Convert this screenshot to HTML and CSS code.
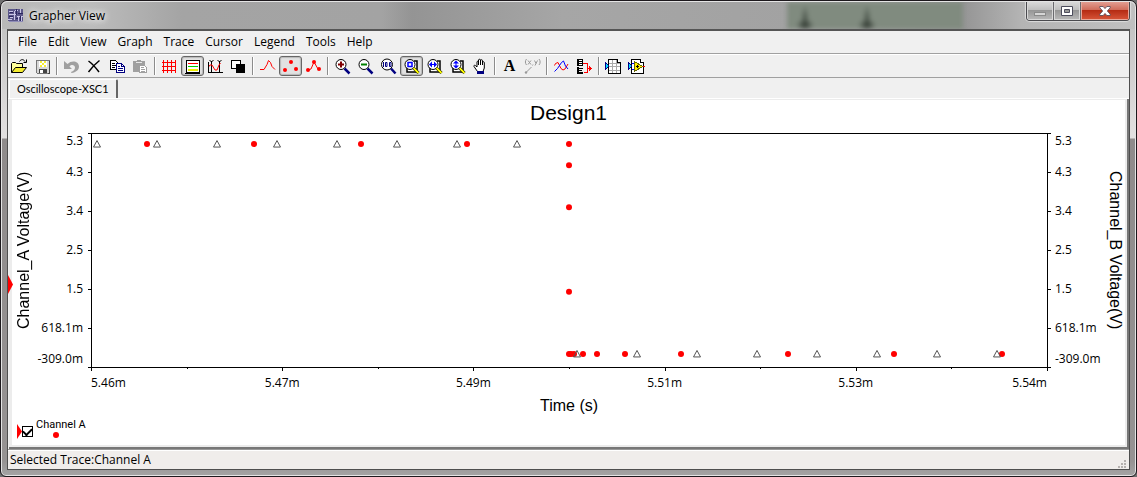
FILE: index.html
```html
<!DOCTYPE html>
<html lang="en">
<head>
<meta charset="utf-8">
<title>Grapher View</title>
<link rel="stylesheet" href="styles.css">
</head>
<body>
<div class="window">
  <header class="titlebar">
    <span class="glass" aria-hidden="true"></span>
    <svg class="app-icon" viewBox="0 0 16 16" aria-hidden="true" shape-rendering="crispEdges">
      <path fill="#5a5688" d="M0 1h15v12H0z"/>
      <path stroke="#c9c6e6" fill="none" d="M1 3.5h4M7 2.5h3M12 1v5M1 6.5h7M6.500 3v9M9 8.500h6M2 9.500h3M10.500 9v4M13.500 9v4M0 11.500h4"/>
      <path stroke="#2b2760" fill="none" d="M2 4.500h3M8.500 1v6M10 5.500h5M1 8.500h4M12.500 8v5M8 10.500h2"/>
      <path fill="#8f8db8" d="M1 13h14v1H1z"/>
    </svg>
    <h1 class="title">Grapher View</h1>
    <div class="win-buttons">
      <button class="win-btn min" aria-label="Minimize"><svg viewBox="0 0 12 10"><rect x=".5" y="6.500" width="11" height="3" fill="#d6d6d6" stroke="#8a8a8a"/></svg></button>
      <button class="win-btn max" aria-label="Maximize"><svg viewBox="0 0 12 10"><path fill="#fff" fill-rule="evenodd" stroke="#4c4c5c" d="M.5.5h11v9H.5zM3.500 3.500v3h5v-3z"/></svg></button>
      <button class="win-btn close" aria-label="Close"><svg viewBox="0 0 12 10"><path fill="#fff" stroke="#4c4452" stroke-width=".8" d="M.8.5h3.400L6 2.600 7.800.5h3.400v1.300L8.300 5l2.900 3.200v1.300H7.800L6 7.400 4.200 9.500H.8V8.200L3.700 5 .8 1.800z"/></svg></button>
    </div>
  </header>

  <div class="client">
    <nav class="menu">
      <button>File</button><button>Edit</button><button>View</button><button>Graph</button><button>Trace</button><button>Cursor</button><button>Legend</button><button>Tools</button><button>Help</button>
    </nav>

    <div class="toolbar" role="toolbar">
      <button aria-label="Open"><svg viewBox="0 0 17 17"><path fill="#ffff9a" stroke="#000" d="M.5 14.500v-9l1-1h3l1 1h6v4"/><path fill="#f4ec30" stroke="#000" d="M.5 14.500l4-5h11l-4 5z"/><path fill="none" stroke="#000" d="M8.500 3.500c1.500-2.500 4-2.500 5.500 0M15.500 1.500v3h-3"/></svg></button>
      <button aria-label="Save"><svg viewBox="0 0 17 17" shape-rendering="crispEdges"><path fill="#d8d8d8" stroke="#777" d="M2.500 2.500h13v13h-12l-1-1z"/><path fill="#fff" d="M5 3h8v6H5z"/><path fill="#f7ee35" d="M6 3h2v2h2v2h2v2h-2V7H8V5H6zM10 3h2v2h-2zM6 7h2v2H6z"/><path fill="#444" d="M5 11h8v4H5zM14 15h2v1h-2zM15 3h1v13h-1z"/><path fill="#fff" d="M6 12h3v3H6z"/></svg></button>
      <span class="sep"></span>
      <button aria-label="Undo" class="off"><svg viewBox="0 0 17 17"><path fill="#a0a0a0" d="M1 3v8h8L6.500 8.500c2-2.500 5.500-1.500 5.500 1 0 2-1.500 3.500-4 4.500l.5 1c4.500-.7 7.500-3 7.500-6.500 0-5-7-7-11.500-2.500z"/></svg></button>
      <button aria-label="Delete"><svg viewBox="0 0 17 17"><path fill="none" stroke="#000" stroke-width="1.500" d="M2.500 3c3.500 2.500 7.500 7 10.500 11M13.500 2.500C9.500 5.500 5.500 10 2.500 14"/></svg></button>
      <button aria-label="Copy"><svg viewBox="0 0 17 17" shape-rendering="crispEdges"><path fill="#fff" stroke="#000" d="M1.500 2.500h5l3 3v6h-8z"/><path stroke="#000" d="M3 5.500h3M3 7.500h4M3 9.500h3"/><path fill="#fff" stroke="#000080" d="M7.500 5.500h5l3 3v6h-8z"/><path fill="none" stroke="#000080" d="M12.500 5v3.500h3M9 8.500h2M9 10.500h5M9 12.500h5"/></svg></button>
      <button aria-label="Paste" class="off"><svg viewBox="0 0 17 17" shape-rendering="crispEdges"><path fill="#a0a0a0" d="M1 3h4V2h4v1h4v4H7v7H1z"/><path fill="#e8e8e8" d="M4 4h6v1H4z"/><path fill="#fff" stroke="#a0a0a0" d="M7.500 7.500h5l2 2v5h-7z"/><path stroke="#a0a0a0" d="M9 9.500h3M9 11.500h4M9 13.500h4"/></svg></button>
      <span class="sep"></span>
      <button aria-label="Toggle grid"><svg viewBox="0 0 17 17" shape-rendering="crispEdges"><path stroke="#f00" d="M2.500 2v13M6.500 2v13M10.500 2v13M14.500 2v13M1 4.500h14M1 8.500h14M1 12.500h14"/></svg></button>
      <button aria-label="Toggle legend" class="on" aria-pressed="true"><svg viewBox="0 0 17 17" shape-rendering="crispEdges"><path fill="#fff" stroke="#000" d="M2.500 2.500h13v12h-13z"/><path fill="none" stroke="#000" d="M1.500 14.500v1h14"/><path stroke="#f00" d="M4 5.500h10"/><path stroke="#0c0" d="M4 8.500h10"/><path stroke="#ee0" stroke-width="2" d="M4 12h10"/></svg></button>
      <button aria-label="Toggle cursors"><svg viewBox="0 0 17 17"><path shape-rendering="crispEdges" stroke="#000" d="M4.500 3v12M12.500 3v12"/><path fill="none" stroke="#000" d="M2.500 2l2 2 2-2M10.500 2l2 2 2-2"/><path fill="none" stroke="#f00" d="M1.500 12v-3l1.500-2h2l3 5h2l2-5 1.500-2"/><path shape-rendering="crispEdges" fill="none" stroke="#000" d="M1.500 4v10.500h14"/></svg></button>
      <button aria-label="Invert colors"><svg viewBox="0 0 17 17" shape-rendering="crispEdges"><path fill="#000" d="M6 6h9v9H6z"/><path fill="#fff" stroke="#000" d="M1.500 2.500h9v8h-9z"/><path fill="#000" d="M6 6h4v4H6z"/><path fill="none" stroke="#fff" d="M5.500 10V5.500H10"/></svg></button>
      <span class="sep"></span>
      <button aria-label="Show lines"><svg viewBox="0 0 17 17"><path fill="none" stroke="#f00" d="M1 11.500h4l3-5 1.500-4 2 2 1.500 4 3 3"/></svg></button>
      <button aria-label="Show points" class="on" aria-pressed="true"><svg viewBox="0 0 17 17"><g fill="#f00"><circle cx="3" cy="12" r="2"/><circle cx="9" cy="4" r="2"/><circle cx="14" cy="11" r="2"/></g></svg></button>
      <button aria-label="Show lines and points"><svg viewBox="0 0 17 17"><path fill="none" stroke="#f00" d="M3 12l3-1 3-7 4 7"/><g fill="#f00"><circle cx="3" cy="12" r="2"/><circle cx="9" cy="4" r="2"/><circle cx="14" cy="11" r="2"/></g></svg></button>
      <span class="sep"></span>
      <button aria-label="Zoom in"><svg viewBox="0 0 17 17"><circle cx="7" cy="6.500" r="5" fill="#fff" stroke="#000"/><path stroke="#800000" stroke-width="2" d="M4 6.500h6M7 3.500v6"/><path stroke="#000080" stroke-width="2.500" d="M10.500 10.500l5 5"/></svg></button>
      <button aria-label="Zoom out"><svg viewBox="0 0 17 17"><circle cx="7" cy="6.500" r="5" fill="#fff" stroke="#000"/><path stroke="#008000" stroke-width="2" d="M4 6.500h6"/><path stroke="#000080" stroke-width="2.500" d="M10.500 10.500l5 5"/></svg></button>
      <button aria-label="Restore zoom"><svg viewBox="0 0 17 17"><circle cx="7" cy="6.500" r="5.500" fill="#fff" stroke="#000"/><path fill="none" stroke="#000080" d="M3.500 4v5M5.500 4.500h1.500v4h-1.500zM9.500 4.500H11v4H9.500z"/><path stroke="#000080" stroke-width="2.500" d="M11 10.500l4.500 5"/></svg></button>
      <button aria-label="Zoom area" class="on" aria-pressed="true"><svg viewBox="0 0 17 17"><path fill="#fff" stroke="#000" stroke-width="1.500" d="M4 9v5h10V3h-3"/><circle cx="7" cy="6.500" r="5" fill="#fff" stroke="#000"/><path fill="none" stroke="#00f" stroke-width="1.500" d="M5 4.500h4v4H5z"/><path stroke="#000" stroke-width="3" d="M10.500 10l5 5"/><path stroke="#ff0" stroke-width="1.800" d="M10.500 10l5 5"/></svg></button>
      <button aria-label="Zoom horizontal"><svg viewBox="0 0 17 17"><path fill="#fff" stroke="#000" stroke-width="1.500" d="M4 9v5h10V3h-3"/><circle cx="7" cy="6.500" r="5" fill="#fff" stroke="#000"/><path fill="#00f" d="M3 6.500l3-3V6h2V3.500l3 3-3 3V7H6v2.500z"/><path stroke="#000" stroke-width="3" d="M10.500 10l5 5"/><path stroke="#ff0" stroke-width="1.800" d="M10.500 10l5 5"/></svg></button>
      <button aria-label="Zoom vertical"><svg viewBox="0 0 17 17"><path fill="#fff" stroke="#000" stroke-width="1.500" d="M4 9v5h10V3h-3"/><circle cx="7" cy="6.500" r="5" fill="#fff" stroke="#000"/><path fill="#00f" d="M7 2.500l3 3H7.500v2H10l-3 3-3-3h2.500v-2H4z"/><path stroke="#000" stroke-width="3" d="M10.500 10l5 5"/><path stroke="#ff0" stroke-width="1.800" d="M10.500 10l5 5"/></svg></button>
      <button aria-label="Pan"><svg viewBox="0 0 17 17"><path fill="#fff" stroke="#000" d="M5.500 13.500l-3.500-5c-.5-1.500 1-1.500 2-.5l1 1V4c0-1 1.500-1 1.500 0v3-5c0-1 2-1 2 0v5-4.500c0-1 2-1 2 0V7 4.500c0-1 1.800-1 1.800 0V10l-1.300 3.500z"/><path fill="#000080" d="M5 13h7v3H5z"/></svg></button>
      <span class="sep"></span>
      <button aria-label="Add text" class="letter">A</button>
      <button aria-label="Add data label" class="off"><svg viewBox="0 0 17 17"><path fill="none" stroke="#999" d="M2.500 1c-1.500 2-1.500 4 0 6M4 2.500l3 4M7 2.500l-3 4M9 6.500l-.5 1M10.500 2.500l1.500 3M13.500 2.500l-2.500 5M15 1c1.500 2 1.500 4 0 6M2.500 14l5-5"/><circle cx="2" cy="14.500" r="1.200" fill="#999"/></svg></button>
      <span class="sep"></span>
      <button aria-label="Overlay traces"><svg viewBox="0 0 17 17"><path fill="none" stroke="#f00" d="M1.500 7.500l1-2 2.500-1 3 6 2 1.500 2-1 3-5"/><path fill="none" stroke="#00f" d="M1.500 13.500l3-3 4-6 2-1.500 2 5 2.500 3"/></svg></button>
      <button aria-label="Digital traces"><svg viewBox="0 0 17 17" shape-rendering="crispEdges"><path fill="#000" d="M1 1h6v7H1zM1 9h2v7H1zM3 10h4v1H3zM3 12h3v1H3zM3 14h4v2H3z"/><path stroke="#fff" d="M3 2.500h3M3 4.500h3M3 6.500h3"/><path fill="none" stroke="#f00" d="M7 5.500h4.500v9H8M11 10.500h4"/><path fill="#f00" d="M13 8l3 2.500-3 2.500z"/></svg></button>
      <span class="sep"></span>
      <button aria-label="Export to spreadsheet"><svg viewBox="0 0 17 17" shape-rendering="crispEdges"><path fill="#fff" stroke="#000" d="M3.500 1.500h9l3 3v11h-12z"/><path stroke="#aaa" d="M7.500 2v13M11.500 2v13M4 5.500h11M4 8.500h11M4 12.500h11"/><path fill="#fff" stroke="#000" d="M12.500 1.500v3h3"/><path fill="#0df" stroke="#008" d="M.5 4.500v7l3.500-3.500z"/></svg></button>
      <button aria-label="Export to instrument"><svg viewBox="0 0 17 17" shape-rendering="crispEdges"><path fill="#fff" stroke="#000" d="M3.500 1.500h9l3 3v11h-12z"/><path fill="#fff" stroke="#000" d="M12.500 1.500v3h3"/><path fill="#0df" stroke="#008" d="M.5 4.500v7l3.500-3.500z"/><path stroke="#00f" d="M4 5.500h3M4 11.500h3"/><path stroke="#f00" d="M14 8.500h3"/><path fill="#fe0" stroke="#660" d="M6.500 3.500v10l8-5z"/><path stroke="#000" d="M8 8.500h3M9.500 7v3"/></svg></button>
    </div>

    <div class="tabs" role="tablist"><button class="tab" role="tab" aria-selected="true">Oscilloscope-XSC1</button></div>

    <main class="page">
      <span class="page-marker" aria-hidden="true"></span>
      <h2 class="chart-title">Design1</h2>
      <div class="chart">
        <div class="axis-title left">Channel_A Voltage(V)</div>
        <div class="y-labels left"><span>5.3</span><span>4.3</span><span>3.4</span><span>2.5</span><span>1.5</span><span>618.1m</span><span>-309.0m</span></div>
        <svg class="plot" id="plot" role="img" aria-label="Channel A and Channel B voltage over time">
          <defs><path id="tri" d="M0 -3.500L3.500 3H-3.500Z" fill="none" stroke="#555"/></defs>
        </svg>
        <div class="y-labels right"><span>5.3</span><span>4.3</span><span>3.4</span><span>2.5</span><span>1.5</span><span>618.1m</span><span>-309.0m</span></div>
        <div class="axis-title right">Channel_B Voltage(V)</div>
        <div class="x-labels"><span>5.46m</span><span>5.47m</span><span>5.49m</span><span>5.51m</span><span>5.53m</span><span>5.54m</span></div>
        <div class="x-title">Time (s)</div>
      </div>
      <div class="legend">
        <span class="trace-marker" aria-hidden="true"></span>
        <input type="checkbox" id="chA" checked>
        <label for="chA">Channel A<span class="dot"></span></label>
      </div>
    </main>

    <footer class="status"><span>Selected Trace:Channel A</span>
      <svg class="grip" viewBox="0 0 9 9" aria-hidden="true" shape-rendering="crispEdges"><path fill="#b5b1af" d="M6 0h2v2H6zM3 3h2v2H3zM6 3h2v2H6zM0 6h2v2H0zM3 6h2v2H3zM6 6h2v2H6z"/></svg>
    </footer>
  </div>
</div>
<script src="plot.js"></script>
</body>
</html>
```
FILE: plot.js
```js
// Coordinates are on a 956 x 233 grid and drawn as percentages of the plot area.
const W = 956, H = 233;
const NS = "http://www.w3.org/2000/svg";
const plot = document.getElementById("plot");
const px = x => (x / W * 100) + "%";
const py = y => (y / H * 100) + "%";

function add(name, attrs) {
  const el = document.createElementNS(NS, name);
  for (const key in attrs) el.setAttribute(key, attrs[key]);
  plot.appendChild(el);
}

function tick(x, y, dx, dy) {
  add("rect", { class: "tick", x: px(x), y: py(y), width: Math.abs(dx) || 1, height: Math.abs(dy) || 1,
    transform: `translate(${Math.min(dx, 0)} ${Math.min(dy, 0)})` });
}

// Frame
add("rect", { class: "tick", x: 0, y: 0, width: "100%", height: 1 });
add("rect", { class: "tick", x: 0, y: "100%", width: "100%", height: 1 });
add("rect", { class: "tick", x: 0, y: 0, width: 1, height: "100%" });
add("rect", { class: "tick", x: "100%", y: 0, width: 1, height: "100%" });

// Ticks
for (const i of [0, 2, 4, 6, 8, 10, 12]) {
  tick(0, i * H / 12, -3, 0);
  tick(W, i * H / 12, 4, 0);
}
for (let i = 0; i <= 10; i++) tick(i * W / 10, H, 0, i % 2 ? 2 : 4);

// Samples
const dots = [[56, 11], [163, 11], [270, 11], [376, 11], [478, 11], [478, 32], [478, 74], [478, 158],
  [478, 220], [480, 220], [483, 220], [492, 220], [506, 220], [534, 220], [590, 220], [697, 220], [803, 220], [911, 220]];
for (const [x, y] of dots) add("circle", { class: "sample", cx: px(x), cy: py(y), r: 3 });
for (let i = 0; i < 16; i++) add("use", { href: "#tri", x: px(6 + 60 * i), y: py(i < 8 ? 11 : 220) });
```
FILE: styles.css
```css
* { box-sizing: border-box; }
body { margin: 0; background: #6f6f6f; font: 12px/16px "Open Sans", "Noto Sans", sans-serif; color: #000; }
button { font: inherit; color: inherit; border: 0; background: none; padding: 0; margin: 0; }
h1, h2 { margin: 0; font-weight: normal; }

.window {
  display: flex; flex-direction: column; height: 100vh; padding: 0 6px 6px;
  border: 1px solid #1c181c; border-radius: 7px 7px 6px 6px;
  box-shadow: inset 0 0 0 1px #e4e4e4;
  background: linear-gradient(#c4c4c4 0 28px, #dcdada 110px, #e2e0e0 137px, #8f8b8b 138px, #969393 460px, #a4a4a4);
}
.titlebar {
  position: relative; display: flex; align-items: center; height: 28px; margin: 0 -5px; padding-left: 6px;
  border-top: 1px solid #e4e4e4; border-radius: 6px 6px 0 0; overflow: hidden;
  background: linear-gradient(90deg, #b8b8b8, #bcbcbc 90px, #a4a4a4 180px, #a3a3a3 380px, #949494 410px, #a6a6a6 560px, #a2a2a2 70%, #969696 85%, #b4b4b4 90%, #c0c0c0);
}
.glass {
  position: absolute; top: 0; bottom: 0; left: 69.300%; width: 15.500%; filter: blur(2px);
  background:
    radial-gradient(ellipse 9px 6px at 18px 23px, #303830, transparent),
    radial-gradient(ellipse 4px 14px at 18px 17px, #465046, transparent),
    radial-gradient(ellipse 9px 6px at 80px 23px, #303830, transparent),
    radial-gradient(ellipse 4px 14px at 80px 17px, #465046, transparent),
    #808b7f;
}
.app-icon { width: 16px; height: 16px; }
.title { margin-left: 5px; font-size: 12px; text-shadow: 0 0 6px #fff, 0 0 8px #fff; }
.win-buttons {
  position: relative; display: flex; align-self: flex-start; margin: -1px 5px 0 auto; height: 20px;
  border: 1px solid #4a4a4e; border-top: 0; border-radius: 0 0 4px 4px; overflow: hidden; box-shadow: 0 0 1px 1px #ddd;
}
.win-btn {
  display: grid; place-items: center; width: 27px; border-right: 1px solid #6a6a6e;
  background: linear-gradient(#dcdcdc, #bdbdbd 48%, #969696 50%, #b9b9b9); box-shadow: inset 0 0 0 1px #d8d8d8;
}
.win-btn svg { width: 12px; height: 10px; }
.win-btn.close { width: 48px; border: 0; background: linear-gradient(#e4a498, #cf6a58 48%, #b52c14 50%, #d8563a); box-shadow: inset 0 0 0 1px #e8a89a; }

.client { flex: 1; display: flex; flex-direction: column; min-height: 0; border: 1px solid #4e4e4e; border-top: 2px solid #555; background: #f0f0f0; }
.menu { display: flex; gap: 11px; height: 23px; padding: 2px 10px; border-bottom: 1px solid #a0a0a0; }
.toolbar { display: flex; align-items: center; height: 24px; border-top: 1px solid #fff; border-bottom: 1px solid #a0a0a0; }
.toolbar button { flex: none; display: grid; place-items: center; width: 23px; height: 20px; }
.toolbar svg { width: 17px; height: 17px; }
.toolbar .on { border: 1px solid #666; border-radius: 3px; background: #e2e2e2; box-shadow: inset 0 0 1px 1px #b8b8b8; }
.toolbar .letter { font: bold 16px/20px "Liberation Serif", serif; }
.sep { flex: none; width: 6px; height: 18px; background: linear-gradient(90deg, transparent 2px, #8c8c8c 2px 3px, #fff 3px 4px, transparent 4px); }

.tabs { display: flex; height: 21px; padding: 1px 1px 0; border-bottom: 1px solid #fff; }
.tab { padding: 0 7px; border: 1px solid #fff; border-right: 2px solid #666; border-bottom: 0; border-radius: 2px 2px 0 0; font: 11px/18px Lato, sans-serif; }

.page {
  position: relative; flex: 1; display: flex; flex-direction: column; min-height: 0; margin: 0 2px 1px 1px;
  border: solid #ececec; border-width: 1px 2px 2px 3px; background: #fff; box-shadow: 1px 1px 0 1px #777;
}
.page-marker { position: absolute; left: -4px; top: 175px; width: 5px; height: 19px; background: #f00; clip-path: polygon(0 0, 100% 50%, 0 100%); }
.chart-title { font: 21px/26px "Liberation Sans", Arial, sans-serif; text-align: center; margin-bottom: 7px; }
.chart {
  flex: 1; min-height: 0; display: grid; font: 12px/16px "Open Sans", sans-serif;
  grid-template: 1fr 31px 16px / 24px 47px 8px 1fr 8px 49px 21px;
}
.axis-title { display: grid; place-items: center; font: 16px/20px "Liberation Sans", Arial, sans-serif; writing-mode: vertical-rl; white-space: nowrap; }
.axis-title.left { transform: rotate(180deg); }
.axis-title.right { grid-column: 7; grid-row: 1; }
.y-labels { display: grid; grid-template-rows: 1fr 2fr 2fr 2fr 2fr 2fr 1fr; min-height: 0; align-items: center; }
.y-labels.left { text-align: right; }
.y-labels.right { grid-column: 6; grid-row: 1; }
.y-labels span { min-height: 0; }
.y-labels span:first-child { align-self: start; }
.y-labels span:last-child { align-self: end; }
.plot { grid-column: 4; grid-row: 1; width: 100%; height: 100%; min-height: 0; overflow: visible; display: block; }
.tick { fill: #000; shape-rendering: crispEdges; }
.sample { fill: #f00; }
.x-labels { grid-column: 4; grid-row: 2; display: grid; grid-template-columns: 1fr 2fr 2fr 2fr 2fr 1fr; padding-top: 8px; text-align: center; }
.x-labels span:first-child { text-align: left; }
.x-labels span:last-child { text-align: right; }
.x-title { grid-column: 4; grid-row: 3; text-align: center; font: 16px/16px "Liberation Sans", Arial, sans-serif; }

.legend { display: flex; height: 31px; padding: 4px 0 0 5px; }
.trace-marker { width: 5px; height: 15px; margin-top: 6px; background: #f00; clip-path: polygon(0 0, 100% 50%, 0 100%); }
.legend input { appearance: none; width: 11px; height: 11px; margin: 8px 3px 0 0; border: 1px solid #000; background: #fff; display: grid; place-items: center; }
.legend input:checked::before { content: ""; width: 7px; height: 4px; border: solid #000; border-width: 0 0 2px 2px; transform: translateY(-1px) rotate(-45deg); }
.legend label { font: 11px/14px Roboto, sans-serif; }
.dot { display: block; width: 6px; height: 6px; margin: 0 0 0 17px; border-radius: 50%; background: #f00; }

.status { display: flex; justify-content: space-between; align-items: center; height: 20px; padding: 1px 2px 0; margin-top: 1px; border-top: 1px solid #999; background: #f0edeb; box-shadow: inset 0 1px #fff; }
.grip { width: 9px; height: 9px; align-self: flex-end; }
```
